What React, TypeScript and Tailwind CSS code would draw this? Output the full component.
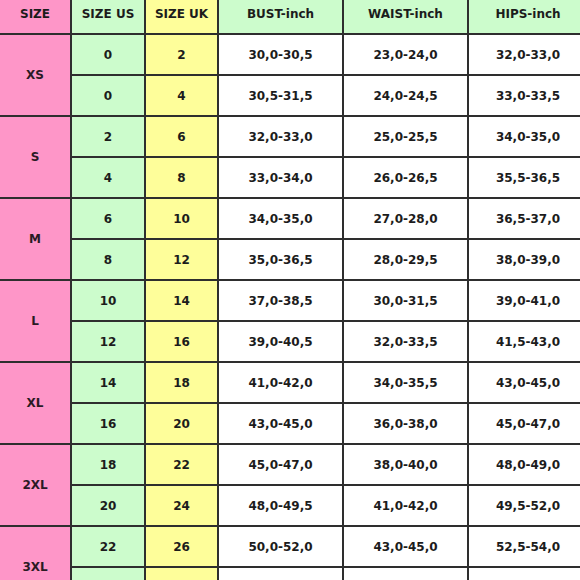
const groups = [
  {
    size: "XS",
    rows: [
      ["0", "2", "30,0-30,5", "23,0-24,0", "32,0-33,0"],
      ["0", "4", "30,5-31,5", "24,0-24,5", "33,0-33,5"],
    ],
  },
  {
    size: "S",
    rows: [
      ["2", "6", "32,0-33,0", "25,0-25,5", "34,0-35,0"],
      ["4", "8", "33,0-34,0", "26,0-26,5", "35,5-36,5"],
    ],
  },
  {
    size: "M",
    rows: [
      ["6", "10", "34,0-35,0", "27,0-28,0", "36,5-37,0"],
      ["8", "12", "35,0-36,5", "28,0-29,5", "38,0-39,0"],
    ],
  },
  {
    size: "L",
    rows: [
      ["10", "14", "37,0-38,5", "30,0-31,5", "39,0-41,0"],
      ["12", "16", "39,0-40,5", "32,0-33,5", "41,5-43,0"],
    ],
  },
  {
    size: "XL",
    rows: [
      ["14", "18", "41,0-42,0", "34,0-35,5", "43,0-45,0"],
      ["16", "20", "43,0-45,0", "36,0-38,0", "45,0-47,0"],
    ],
  },
  {
    size: "2XL",
    rows: [
      ["18", "22", "45,0-47,0", "38,0-40,0", "48,0-49,0"],
      ["20", "24", "48,0-49,5", "41,0-42,0", "49,5-52,0"],
    ],
  },
  {
    size: "3XL",
    rows: [
      ["22", "26", "50,0-52,0", "43,0-45,0", "52,5-54,0"],
      ["24", "28", "52,0-54,0", "45,0-47,0", "54,0-56,0"],
    ],
  },
];

const headers = [
  { label: "SIZE", bg: "bg-[#fe96c8]" },
  { label: "SIZE US", bg: "bg-[#ccfccc]" },
  { label: "SIZE UK", bg: "bg-[#fefe9a]" },
  { label: "BUST-inch", bg: "bg-[#ccfccc]" },
  { label: "WAIST-inch", bg: "bg-[#ccfccc]" },
  { label: "HIPS-inch", bg: "bg-[#ccfccc]" },
];

const cell = "flex items-center justify-center";

export default function App() {
  return (
    <div className="h-[580px] w-[580px] overflow-hidden bg-white">
      <div
        className="grid w-[600px] gap-[2px] bg-[#2e2e2e] text-[12px] font-bold text-[#1c1c1c]"
        style={{ fontFamily: '"DejaVu Sans", Verdana, sans-serif' }}
      >
        <div className="grid grid-cols-[70px_72px_71px_123px_123px_118px] grid-rows-[33px] gap-[2px]">
          {headers.map((h) => (
            <div key={h.label} className={`${cell} ${h.bg} pb-[6px]`}>
              {h.label}
            </div>
          ))}
        </div>
        {groups.map((g) => (
          <div
            key={g.size}
            className="grid grid-cols-[70px_72px_71px_123px_123px_118px] grid-rows-[39px_39px] gap-[2px]"
          >
            <div className={`${cell} row-span-2 bg-[#fe96c8] text-[#2a1a24]`}>{g.size}</div>
            {g.rows.map((r, i) => (
              <div key={i} className="contents">
                <div className={`${cell} bg-[#ccfccc]`}>{r[0]}</div>
                <div className={`${cell} bg-[#fefe9a]`}>{r[1]}</div>
                <div className={`${cell} bg-white`}>{r[2]}</div>
                <div className={`${cell} bg-white`}>{r[3]}</div>
                <div className={`${cell} bg-white`}>{r[4]}</div>
              </div>
            ))}
          </div>
        ))}
      </div>
    </div>
  );
}
